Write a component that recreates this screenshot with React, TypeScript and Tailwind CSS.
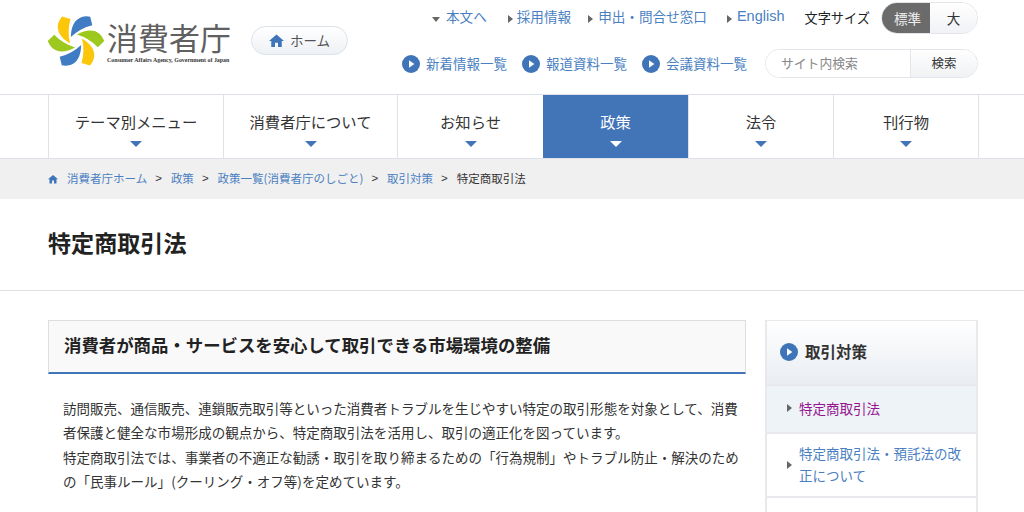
import React from "react";

const jp = "[font-family:'Noto_Sans_CJK_JP','Noto_Sans_CJK_SC',sans-serif]";

function Logo() {
  const blade = "M-14,-24.5 L-5.5,-22 Q-9,-10 -6,2.5 Q-20,-6 -18,-17 Q-17,-21 -14,-24.5 Z";
  const colors = ["#fcc70a", "#3f7cc4", "#9dc81e", "#fcc70a", "#3f7cc4", "#9dc81e"];
  return (
    <svg width="56" height="50" viewBox="-28 -25 56 50" className="shrink-0">
      {colors.map((c, i) => (
        <path key={i} d={blade} fill={c} transform={`rotate(${i * 60})`} />
      ))}
    </svg>
  );
}

function HomeIcon({ size, color }: { size: number; color: string }) {
  return (
    <svg width={size} height={size} viewBox="0 0 16 16" className="shrink-0">
      <path d="M8 1.5 L16 8.5 L13.6 8.5 L13.6 15 L9.6 15 L9.6 10.5 L6.4 10.5 L6.4 15 L2.4 15 L2.4 8.5 L0 8.5 Z" fill={color} />
    </svg>
  );
}

function Circle({ size = 18 }: { size?: number }) {
  return (
    <svg width={size} height={size} viewBox="0 0 18 18" className="shrink-0">
      <circle cx="9" cy="9" r="9" fill="#3f75b8" />
      <path d="M7 5.2 L12.4 9 L7 12.8 Z" fill="#fff" />
    </svg>
  );
}

function Right({ className = "", color = "#666" }: { className?: string; color?: string }) {
  return (
    <svg width="5" height="8" viewBox="0 0 5 8" className={`shrink-0 ${className}`}>
      <path d="M0 0 L5 4 L0 8 Z" fill={color} />
    </svg>
  );
}

function NavItem({ label, active, w }: { label: string; active?: boolean; w: string }) {
  return (
    <div
      className={`${w} h-full flex flex-col items-center border-r border-[#dfe2e8] ${
        active ? "bg-[#4275b8] text-white -ml-px" : "text-[#333]"
      }`}
    >
      <span className="text-[15.3px] leading-[22px] mt-[15px]">{label}</span>
      <svg width="12" height="6" viewBox="0 0 12 6" className="mt-[9px]">
        <path d="M0 0 H12 L6 6 Z" fill={active ? "#fff" : "#4275b8"} />
      </svg>
    </div>
  );
}

function Crumb({ children }: { children: React.ReactNode }) {
  return (
    <>
      <span className="text-[#4a7fc1]">{children}</span>
      <span className="text-[#333] text-[11.5px] font-['Liberation_Sans'] ml-[8px] mr-[9px]">&gt;</span>
    </>
  );
}

export default function App() {
  return (
    <div className={`w-[1024px] h-[512px] overflow-hidden bg-white text-[#333] ${jp}`}>
      <header className="h-[95px] border-b border-[#dfe1e8]">
        <div className="ml-[48px] w-[930px] flex h-full">
          <div className="w-[181px] shrink-0 pt-[16px] flex items-start">
            <div className="mr-[4px]">
              <Logo />
            </div>
            <div className="flex flex-col -ml-[1px]">
              <span className="text-[31px] leading-[30px] font-normal text-[#606060] whitespace-nowrap mt-[6px]">
                消費者庁
              </span>
              <span className="text-[5.9px] leading-[6px] font-bold font-['Liberation_Serif'] text-[#333] whitespace-nowrap mt-[5px]">
                Consumer Affairs Agency, Government of Japan
              </span>
            </div>
          </div>
          <div className="ml-[22px] mt-[26px] w-[97px] h-[29px] rounded-full border border-[#dde1e8] bg-gradient-to-b from-white to-[#eef1f5] flex items-center justify-center gap-[6px] text-[13.5px] text-[#555]">
            <HomeIcon size={15} color="#3f75b8" />
            <span>ホーム</span>
          </div>
          <div className="flex-1 flex flex-col items-end pt-[2px]">
            <div className="h-[32px] flex items-center text-[13.6px] text-[#4a7fc1] leading-[20px] whitespace-nowrap">
              <div className="flex items-center -mt-[5px]">
                <svg width="8" height="5" viewBox="0 0 8 5" className="mt-[7px] mr-[6px]">
                  <path d="M0 0 H8 L4 5 Z" fill="#666" />
                </svg>
                <span>本文へ</span>
              </div>
              <div className="flex items-center gap-[4px] ml-[21px] -mt-[5px]">
                <Right className="mt-[6px]" />
                <span>採用情報</span>
              </div>
              <div className="flex items-center gap-[5px] ml-[17px] -mt-[5px]">
                <Right className="mt-[6px]" />
                <span>申出・問合せ窓口</span>
              </div>
              <div className="flex items-center gap-[5px] ml-[20px] -mt-[5px]">
                <Right className="mt-[6px]" />
                <span className="font-['Liberation_Sans'] text-[14.5px]">English</span>
              </div>
              <span className="ml-[20px] text-[13.2px] text-[#222] -mt-[1px]">文字サイズ</span>
              <div className="ml-[11px] flex h-[32px] w-[97px] rounded-full border border-[#e3e5ea] overflow-hidden text-[13.6px]">
                <div className="w-[48px] bg-[#6b6b6b] text-white/90 flex items-center justify-center pl-[3px]">標準</div>
                <div className="flex-1 bg-gradient-to-b from-white to-[#f0f2f5] text-[#333] flex items-center justify-center">大</div>
              </div>
            </div>
            <div className="mt-[15px] h-[29px] flex items-center text-[13.5px] text-[#4a7fc1] whitespace-nowrap">
              <div className="flex items-center gap-[6px]">
                <Circle />
                <span>新着情報一覧</span>
              </div>
              <div className="flex items-center gap-[6px] ml-[15px]">
                <Circle />
                <span>報道資料一覧</span>
              </div>
              <div className="flex items-center gap-[6px] ml-[15px]">
                <Circle />
                <span>会議資料一覧</span>
              </div>
              <div className="ml-[18px] flex w-[213px] h-[29px] rounded-full border border-[#e3e5ea] overflow-hidden">
                <div className="w-[145px] bg-white text-[#888] text-[12.8px] pl-[15px] pb-[2px] flex items-center border-r border-[#e3e5ea]">
                  サイト内検索
                </div>
                <div className="flex-1 bg-gradient-to-b from-white to-[#eff1f4] text-[#333] text-[12.5px] flex items-center justify-center">
                  検索
                </div>
              </div>
            </div>
          </div>
        </div>
      </header>

      <nav className="h-[64px] border-b border-[#dfe1e8]">
        <div className="ml-[48px] w-[931px] h-full flex border-l border-[#dfe2e8]">
          <NavItem w="w-[175px]" label="テーマ別メニュー" />
          <NavItem w="w-[174px]" label="消費者庁について" />
          <NavItem w="w-[146px]" label="お知らせ" />
          <NavItem w="w-[146px]" label="政策" active />
          <NavItem w="w-[145px]" label="法令" />
          <NavItem w="w-[145px]" label="刊行物" />
        </div>
      </nav>

      <div className="h-[40px] bg-[#f0f0f0]">
        <div className="ml-[48px] h-full flex items-center text-[11.5px] whitespace-nowrap pb-[1px]">
          <HomeIcon size={10} color="#3f75b8" />
          <span className="w-[9px]" />
          <Crumb>消費者庁ホーム</Crumb>
          <Crumb>政策</Crumb>
          <Crumb>政策一覧(消費者庁のしごと)</Crumb>
          <Crumb>取引対策</Crumb>
          <span className="text-[#333]">特定商取引法</span>
        </div>
      </div>

      <div className="h-[92px] border-b border-[#dfdfdf] flex items-center pl-[48px]">
        <h1 className="text-[23.1px] font-bold text-[#222] leading-[34px] -mt-[5px]">特定商取引法</h1>
      </div>

      <div className="ml-[48px] w-[930px] flex justify-between pt-[29px]">
        <main className="w-[698px]">
          <div className="h-[54px] border border-[#dedede] border-b-2 border-b-[#4275b8] bg-[#f9f9f9] flex items-center pl-[15px]">
            <h2 className="text-[17.4px] font-bold text-[#222] leading-[26px] whitespace-nowrap -mt-[3px]">
              消費者が商品・サービスを安心して取引できる市場環境の整備
            </h2>
          </div>
          <div className="mt-[22px] pl-[15px] pr-[4px] text-[13.52px] leading-[24.4px] text-[#333]">
            <p>
              訪問販売、通信販売、連鎖販売取引等といった消費者トラブルを生じやすい特定の取引形態を対象として、消費者保護と健全な市場形成の観点から、特定商取引法を活用し、取引の適正化を図っています。
            </p>
            <p>
              特定商取引法では、事業者の不適正な勧誘・取引を取り締まるための「行為規制」やトラブル防止・解決のための「民事ルール」(クーリング・オフ等)を定めています。
            </p>
          </div>
        </main>

        <aside className="w-[213px] border-2 border-b-0 border-[#e7e9ed] h-[300px]">
          <div className="h-[63px] -mt-px bg-gradient-to-b from-white to-[#e9edf2] flex items-center pl-[13px] gap-[7px] pb-[2px]">
            <Circle />
            <span className="text-[15.5px] font-bold text-[#333]">取引対策</span>
          </div>
          <div className="h-[50px] border-y-2 border-[#e7e9ed] bg-[#eef3f8] flex items-center pl-[20px] gap-[7px] text-[13.5px] text-[#96148f] pb-[2px]">
            <Right />
            <span>特定商取引法</span>
          </div>
          <div className="h-[64px] border-b-2 border-[#e7e9ed] flex items-center pl-[20px] gap-[7px] text-[13.5px] leading-[22.5px] text-[#4a7fc1] pb-[2px]">
            <Right className="mt-[2px]" />
            <span className="w-[170px]">特定商取引法・預託法の改正について</span>
          </div>
        </aside>
      </div>
    </div>
  );
}
